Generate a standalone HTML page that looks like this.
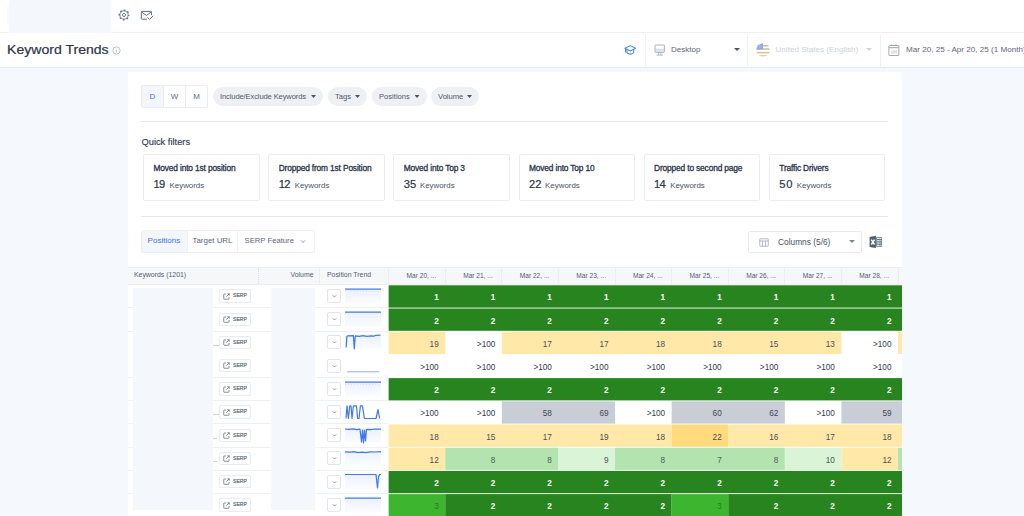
<!DOCTYPE html>
<html><head><meta charset="utf-8"><title>Keyword Trends</title>
<style>
*{box-sizing:border-box;margin:0;padding:0}
html,body{width:1024px;height:516px;overflow:hidden}
body{background:#f5f8fc;font-family:"Liberation Sans",sans-serif;color:#2f3a4f;position:relative;font-size:8px}
.abs{position:absolute}
.topbar{left:0;top:0;width:1024px;height:33px;background:#fff;border-bottom:1px solid #eceff4}
.ph{background:#f4f7fc}
.hdr{left:0;top:33px;width:1024px;height:35px;background:#fff;border-bottom:1px solid #e9edf3}
.title{left:7px;top:41px;font-size:13px;color:#2b3448;white-space:nowrap;line-height:18px;-webkit-text-stroke:.2px #2b3448;transform:scaleX(1.082);transform-origin:0 0}
.vsep{width:1px;top:34px;height:33px;background:#eef1f5}
.ht{top:44.200px;font-size:8px;line-height:12px;white-space:nowrap;color:#5d6678}
.card{left:128px;top:71.500px;width:773.500px;height:460px;background:#fff}
.seg{left:141px;top:85px;width:67px;height:23px;border:1px solid #e9edf3;border-radius:2px;background:#fff;display:flex}
.seg div{flex:1;text-align:center;font-size:8px;line-height:21px;color:#5b6b8c;border-left:1px solid #e6eaf1}
.seg div:first-child{border-left:0;background:#f3f6fb;color:#3b74e8}
.pill{top:87px;height:19px;border-radius:10px;background:#eef0f3;font-size:7.6px;line-height:19px;color:#505a6c;white-space:nowrap;padding-left:7px}
.pill i{position:absolute;right:7px;top:8px;width:5px;height:3px;background:#4a5366;clip-path:polygon(0 0,100% 0,50% 100%)}
.hr{left:141px;width:747px;height:1px;background:#e3e7ec}
.qf{left:141.500px;top:136.800px;font-size:9.300px;line-height:11px;color:#2f3a4f;-webkit-text-stroke:.150px #2f3a4f}
.qc{top:154px;width:116.600px;height:47px;border:1px solid #eaedf2;border-radius:2px;background:#fff}
.qc b{position:absolute;left:9.400px;top:7.600px;font-weight:normal;font-size:8.400px;letter-spacing:-.160px;line-height:10px;color:#2b3448;white-space:nowrap;-webkit-text-stroke:.300px #2b3448}
.qc span{position:absolute;left:9.400px;top:22px;font-size:11.200px;letter-spacing:-.700px;line-height:14px;-webkit-text-stroke:.200px #2b3448;color:#2b3448;white-space:nowrap}
.qc em{-webkit-text-stroke:0;font-style:normal;font-size:7.900px;color:#4a5366;margin-left:5px;letter-spacing:0}
.tabs{left:141px;top:230.300px;width:173.500px;height:22.500px;border:1px solid #edeff3;border-radius:2px;background:#fff}
.tabs div{position:absolute;top:0;height:20.500px;font-size:7.900px;line-height:20.500px;text-align:center;color:#5d6678;white-space:nowrap}
.colsel{left:748px;top:230.700px;width:114px;height:22.500px;border:1px solid #e6eaf0;border-radius:2px;background:#fff;font-size:8.350px;line-height:20px;color:#4a5366}
.th{top:267px;height:18px;background:#f6f7f9;border-top:1px solid #eceef2;border-bottom:1px solid #eceef2;font-size:6.9px;line-height:15px;color:#525c70;white-space:nowrap}
.c{position:absolute;text-align:right;padding-right:6.600px;font-size:8.200px;line-height:25.200px;white-space:nowrap}
.g1{color:#fff;font-weight:bold}
.g2{color:#2a7a22}
.g3{color:#4d6058}
.g4{color:#4a5a55}
.y1{color:#4a4f60}
.y2{color:#4a4f60}
.gr{color:#3f4759}
.w{color:#2f3a4f}
.serp{left:219.300px;width:31.500px;height:13.500px;border:1px solid #e8ebef;border-radius:2px;background:#fff;font-size:6.100px;line-height:10.400px;color:#5a6d7d;padding-left:12.500px}
.serp span{display:inline-block;transform:scaleX(.840);transform-origin:0 50%;-webkit-text-stroke:.200px #5a6d7d}
.dd{left:327.300px;width:13.500px;height:14px;border:1px solid #e1e5eb;border-radius:2px;background:#fff}
.sl{stroke:#3f78ea;stroke-width:1.2;fill:none;stroke-linejoin:round}
.rl{left:128px;width:260px;height:1px;background:#edf0f4}
</style></head><body>

<div class="abs topbar"></div>
<div class="abs" style="left:7px;top:6px;width:3px;height:19px;background:#f8fafd"></div>
<div class="abs ph" style="left:9px;top:0;width:102px;height:33.500px"></div>
<svg class="abs" style="left:118px;top:9.200px" width="12" height="12" viewBox="0 0 24 24" fill="none" stroke="#5d6c85" stroke-width="1.700"><circle cx="12" cy="12" r="3.100"/><circle cx="12" cy="12" r="8.300"/><circle cx="12" cy="12" r="9.700" stroke-width="2.600" stroke-dasharray="3.400 4.218" stroke-dashoffset="1.700"/></svg>
<svg class="abs" style="left:140px;top:10px" width="14" height="11" viewBox="0 0 28 22" fill="none" stroke="#5d6c85" stroke-width="2" stroke-linecap="round" stroke-linejoin="round"><path d="M13 18.400H4.400a1.800 1.800 0 0 1-1.800-1.800V4.600a1.800 1.800 0 0 1 1.800-1.800H21.200a1.800 1.800 0 0 1 1.800 1.800V9.600"/><path d="M3.200 4l9.600 6.800L22.400 4"/><path d="M15.600 15.400l3.400 3.600 7-7"/></svg>
<div class="abs hdr"></div>
<div class="abs title">Keyword Trends</div>
<svg class="abs" style="left:111.500px;top:45.500px" width="9" height="9" viewBox="0 0 18 18" fill="none" stroke="#a4abb8" stroke-width="1.400"><circle cx="9" cy="9" r="7.300"/><path d="M9 8v5M9 5v1.400"/></svg>
<svg class="abs" style="left:624.100px;top:44px" width="12.600" height="12" viewBox="0 0 26 24" fill="none" stroke="#4a88fb" stroke-width="2.200" stroke-linejoin="round" stroke-linecap="round"><path d="M13 3L2 8.500l11 5.500 11-5.500z"/><path d="M6 11v6.500c2 2 4.500 3 7 3s5-1 7-3V11"/><path d="M3 9v7"/></svg>
<div class="abs vsep" style="left:645px"></div>
<svg class="abs" style="left:653.500px;top:44.200px" width="12" height="12" viewBox="0 0 12 12" fill="none" stroke="#98a3b3"><rect x="1.500" y="5.300" width="8.400" height="2.600" fill="#e4e7eb" stroke="none"/><rect x="1" y="1" width="9.400" height="7.300" rx=".600" stroke-width=".850"/><path d="M1 5.200h9.400" stroke-width=".500" stroke="#b4bcc8"/><path d="M4.600 8.300v2.600M6.800 8.300v2.600" stroke-width=".800" stroke="#a6afbd"/><path d="M2.600 11.100h6.400" stroke-width=".900" stroke="#a6afbd"/></svg>
<div class="abs ht" style="left:671px">Desktop</div>
<i class="abs" style="left:734px;top:48.400px;border:3px solid transparent;border-top:3.500px solid #4a5366;border-bottom:0"></i>
<div class="abs vsep" style="left:747px"></div>
<svg class="abs" style="left:756px;top:43px" width="14" height="14" viewBox="0 0 28 28"><defs><clipPath id="fc"><circle cx="14" cy="14" r="13.500"/></clipPath></defs><g clip-path="url(#fc)"><rect width="28" height="28" fill="#fff"/><g fill="#d6b78c"><rect y="4" width="28" height="2.800"/><rect y="10.600" width="28" height="2.800"/><rect y="17.800" width="28" height="3"/><rect y="24.600" width="28" height="2.400"/></g><rect width="14" height="12.600" fill="#8aa8f3"/><path d="M3 4h9M3 8h9" stroke="#fff" stroke-width="1.200" stroke-dasharray="1.500 1.500" opacity=".800"/><path d="M3 19.300h22" stroke="#fff" stroke-width="1" stroke-dasharray="1.600 1.600" opacity=".700"/></g></svg>
<div class="abs ht" style="left:775.500px;color:#cdd1d8;font-size:8.100px">United States (English)</div>
<i class="abs" style="left:866px;top:48.400px;border:3px solid transparent;border-top:3.500px solid #d0d4db;border-bottom:0"></i>
<div class="abs vsep" style="left:880px"></div>
<svg class="abs" style="left:888.100px;top:44px" width="12" height="12" viewBox="0 0 12 12" fill="none" stroke="#98a3b3"><rect x=".900" y="1.500" width="10" height="10" rx=".400" stroke-width=".900"/><path d="M.900 3.700h10" stroke-width="1"/><path d="M3.500 .500v1.300M8 .500v1.300" stroke-width="1.300"/><path d="M4 5.800v4.200M6 5.800v4.200M8 5.800v4.200M3 7.900h6" stroke-width=".500" stroke="#b7bec9"/></svg>
<div class="abs ht" style="left:906px;font-size:8.100px">Mar 20, 25 - Apr 20, 25 (1 Month)</div>
<div class="abs card"></div>
<div class="abs seg"><div>D</div><div>W</div><div>M</div></div>
<div class="abs pill" style="left:213px;width:110px;letter-spacing:-.130px">Include/Exclude Keywords<i></i></div>
<div class="abs pill" style="left:328px;width:39px">Tags<i></i></div>
<div class="abs pill" style="left:372px;width:54.5px">Positions<i></i></div>
<div class="abs pill" style="left:431px;width:48px">Volume<i></i></div>
<div class="abs hr" style="top:121px"></div>
<div class="abs qf">Quick filters</div>
<div class="abs qc" style="left:143.10px"><b>Moved into 1st position</b><span>19<em>Keywords</em></span></div>
<div class="abs qc" style="left:268.25px"><b>Dropped from 1st Position</b><span>12<em>Keywords</em></span></div>
<div class="abs qc" style="left:393.40px"><b>Moved into Top 3</b><span style="letter-spacing:.100px">35<em style="margin-left:3.500px">Keywords</em></span></div>
<div class="abs qc" style="left:518.55px"><b>Moved into Top 10</b><span style="letter-spacing:.100px">22<em style="margin-left:3.500px">Keywords</em></span></div>
<div class="abs qc" style="left:643.70px"><b>Dropped to second page</b><span>14<em>Keywords</em></span></div>
<div class="abs qc" style="left:768.85px"><b>Traffic Drivers</b><span style="letter-spacing:.800px">50<em style="margin-left:3.500px">Keywords</em></span></div>
<div class="abs hr" style="top:216px"></div>
<div class="abs tabs"><div style="left:0;width:45px;background:#f3f6fb;color:#3b74e8;font-size:8.100px;text-indent:-1px">Positions</div><div style="left:45px;width:51px;border-left:1px solid #edeff3;border-right:1px solid #edeff3">Target URL</div><div style="left:96px;width:76px;text-align:left;padding-left:6.500px;font-size:7.700px">SERP Feature<svg style="position:absolute;left:61.500px;top:8px" width="6" height="5" viewBox="0 0 12 10" fill="none" stroke="#7b8496" stroke-width="1.800"><path d="M2 3l4 4 4-4"/></svg></div></div>
<div class="abs colsel"><svg style="position:absolute;left:10px;top:6px" width="10" height="9" viewBox="0 0 20 18" fill="none" stroke="#9aa2b1" stroke-width="1.500"><rect x="1.500" y="1.500" width="17" height="15" rx="1"/><path d="M1.500 6h17M7 6v10.500M13 6v10.500"/></svg><span style="position:absolute;left:29px;top:0">Columns (5/6)</span><i style="position:absolute;right:6.500px;top:8.500px;border:3px solid transparent;border-top:3.500px solid #7b8496;border-bottom:0"></i></div>
<svg class="abs" style="left:869px;top:235px" width="14" height="14" viewBox="0 0 14 14"><rect x="7.200" y="2" width="5.700" height="9.700" rx=".500" fill="#64778a"/><path d="M8 3.400h4.300M8 5.700h4.300M8 8h4.300M8 10.300h4.300" stroke="#fff" stroke-width="1.100"/><path d="M11 2.500v9" stroke="#64778a" stroke-width=".500"/><path d="M.600 2L6.900.800V12.900L.600 11.900z" fill="#4d6070"/><path d="M2.300 4.600L5.500 9.500M5.500 4.600L2.300 9.500" stroke="#fff" stroke-width="1.500"/></svg>
<div class="abs th" style="left:128px;width:774px"></div>
<div class="abs th" style="left:134px;background:none;border:0;top:267px;line-height:16px">Keywords (1201)</div>
<div class="abs" style="left:258px;top:268px;height:16px;border-left:1px dotted #d8dce3"></div>
<div class="abs th" style="left:260px;width:53.500px;text-align:right;background:none;border:0;line-height:16px">Volume</div>
<div class="abs" style="left:319px;top:268px;height:16px;border-left:1px solid #eaedf1"></div>
<div class="abs th" style="left:327px;background:none;border:0;line-height:16px">Position Trend</div>
<div class="abs" style="left:388.15px;top:268px;height:16px;border-left:1px solid #eaedf1"></div>
<div class="abs th" style="left:388.65px;width:56.60000000000002px;text-align:right;padding-right:9px;background:none;border:0;line-height:17.400px;font-size:6.600px">Mar 20, ...</div>
<div class="abs" style="left:444.75px;top:268px;height:16px;border-left:1px solid #eaedf1"></div>
<div class="abs th" style="left:445.25px;width:56.60000000000002px;text-align:right;padding-right:9px;background:none;border:0;line-height:17.400px;font-size:6.600px">Mar 21, ...</div>
<div class="abs" style="left:501.35px;top:268px;height:16px;border-left:1px solid #eaedf1"></div>
<div class="abs th" style="left:501.85px;width:56.60000000000002px;text-align:right;padding-right:9px;background:none;border:0;line-height:17.400px;font-size:6.600px">Mar 22, ...</div>
<div class="abs" style="left:557.95px;top:268px;height:16px;border-left:1px solid #eaedf1"></div>
<div class="abs th" style="left:558.45px;width:56.59999999999991px;text-align:right;padding-right:9px;background:none;border:0;line-height:17.400px;font-size:6.600px">Mar 23, ...</div>
<div class="abs" style="left:614.55px;top:268px;height:16px;border-left:1px solid #eaedf1"></div>
<div class="abs th" style="left:615.05px;width:56.60000000000002px;text-align:right;padding-right:9px;background:none;border:0;line-height:17.400px;font-size:6.600px">Mar 24, ...</div>
<div class="abs" style="left:671.15px;top:268px;height:16px;border-left:1px solid #eaedf1"></div>
<div class="abs th" style="left:671.65px;width:56.60000000000002px;text-align:right;padding-right:9px;background:none;border:0;line-height:17.400px;font-size:6.600px">Mar 25, ...</div>
<div class="abs" style="left:727.75px;top:268px;height:16px;border-left:1px solid #eaedf1"></div>
<div class="abs th" style="left:728.25px;width:56.60000000000002px;text-align:right;padding-right:9px;background:none;border:0;line-height:17.400px;font-size:6.600px">Mar 26, ...</div>
<div class="abs" style="left:784.35px;top:268px;height:16px;border-left:1px solid #eaedf1"></div>
<div class="abs th" style="left:784.85px;width:56.60000000000002px;text-align:right;padding-right:9px;background:none;border:0;line-height:17.400px;font-size:6.600px">Mar 27, ...</div>
<div class="abs" style="left:840.95px;top:268px;height:16px;border-left:1px solid #eaedf1"></div>
<div class="abs th" style="left:841.45px;width:56.59999999999991px;text-align:right;padding-right:9px;background:none;border:0;line-height:17.400px;font-size:6.600px">Mar 28, ...</div>
<div class="abs" style="left:897.55px;top:268px;height:16px;border-left:1px solid #eaedf1"></div>
<svg class="abs" style="left:388px;top:285px" width="514" height="231" viewBox="388 285 514 231"><rect x="388.65" y="285.30" width="513.35" height="22.300" fill="#27841e"/><rect x="388.65" y="308.50" width="513.35" height="22.300" fill="#27841e"/><rect x="388.65" y="331.70" width="56.60" height="22.300" fill="#ffe8a8"/><rect x="501.85" y="331.70" width="339.60" height="22.300" fill="#ffe8a8"/><rect x="898.05" y="331.70" width="3.95" height="22.300" fill="#ffe8a8"/><rect x="388.65" y="378.10" width="513.35" height="22.300" fill="#27841e"/><rect x="501.85" y="401.30" width="113.20" height="22.300" fill="#c9cdd6"/><rect x="671.65" y="401.30" width="113.20" height="22.300" fill="#c9cdd6"/><rect x="841.45" y="401.30" width="60.55" height="22.300" fill="#c9cdd6"/><rect x="388.65" y="424.50" width="283.00" height="22.300" fill="#ffe8a8"/><rect x="671.65" y="424.50" width="56.60" height="22.300" fill="#ffdb7d"/><rect x="728.25" y="424.50" width="173.75" height="22.300" fill="#ffe8a8"/><rect x="388.65" y="447.70" width="56.60" height="22.300" fill="#ffe8a8"/><rect x="445.25" y="447.70" width="113.20" height="22.300" fill="#b3e3ae"/><rect x="558.45" y="447.70" width="56.60" height="22.300" fill="#d9f4d6"/><rect x="615.05" y="447.70" width="169.80" height="22.300" fill="#b3e3ae"/><rect x="784.85" y="447.70" width="56.60" height="22.300" fill="#d9f4d6"/><rect x="841.45" y="447.70" width="56.60" height="22.300" fill="#ffe8a8"/><rect x="898.05" y="447.70" width="3.95" height="22.300" fill="#b3e3ae"/><rect x="388.65" y="470.90" width="513.35" height="22.300" fill="#27841e"/><rect x="388.65" y="494.10" width="56.60" height="22.300" fill="#3db52e"/><rect x="445.25" y="494.10" width="226.40" height="22.300" fill="#27841e"/><rect x="671.65" y="494.10" width="56.60" height="22.300" fill="#3db52e"/><rect x="728.25" y="494.10" width="173.75" height="22.300" fill="#27841e"/></svg>
<div class="abs rl" style="top:307.30px"></div>
<div class="abs serp" style="top:289.30px"><svg style="position:absolute;left:3px;top:2.500px" width="7" height="7" viewBox="0 0 14 14" fill="none" stroke="#5b6b7a" stroke-width="1.500"><path d="M6 2H2.500a1 1 0 0 0-1 1v8.500a1 1 0 0 0 1 1H11a1 1 0 0 0 1-1V8"/><path d="M8.500 1.500h4v4M12.500 1.500L6.500 7.500"/></svg><span>SERP</span></div>
<div class="abs dd" style="top:289.00px"><svg style="position:absolute;left:3.500px;top:4px" width="5" height="4" viewBox="0 0 10 8" fill="none" stroke="#6b7385" stroke-width="1.400"><path d="M1.500 2.500l3.500 3.500 3.500-3.500"/></svg></div>
<svg class="abs" style="left:345px;top:287.8px" width="36" height="17" viewBox="0 0 36 17"><rect x="0" y="1.500" width="36" height="14" fill="url(#sg)"/><path d="M0 1.2H36" class="sl"/><path d="M0 3.5H36" stroke="#c9d6ee" stroke-width=".6" stroke-dasharray="1 2" fill="none"/></svg>
<div class="c g1" style="left:388.65px;top:285.30px;width:56.65px;height:22.200px">1</div>
<div class="c g1" style="left:445.25px;top:285.30px;width:56.65px;height:22.200px">1</div>
<div class="c g1" style="left:501.85px;top:285.30px;width:56.65px;height:22.200px">1</div>
<div class="c g1" style="left:558.45px;top:285.30px;width:56.65px;height:22.200px">1</div>
<div class="c g1" style="left:615.05px;top:285.30px;width:56.65px;height:22.200px">1</div>
<div class="c g1" style="left:671.65px;top:285.30px;width:56.65px;height:22.200px">1</div>
<div class="c g1" style="left:728.25px;top:285.30px;width:56.65px;height:22.200px">1</div>
<div class="c g1" style="left:784.85px;top:285.30px;width:56.65px;height:22.200px">1</div>
<div class="c g1" style="left:841.45px;top:285.30px;width:56.65px;height:22.200px">1</div>
<div class="abs rl" style="top:330.50px"></div>
<div class="abs serp" style="top:312.50px"><svg style="position:absolute;left:3px;top:2.500px" width="7" height="7" viewBox="0 0 14 14" fill="none" stroke="#5b6b7a" stroke-width="1.500"><path d="M6 2H2.500a1 1 0 0 0-1 1v8.500a1 1 0 0 0 1 1H11a1 1 0 0 0 1-1V8"/><path d="M8.500 1.500h4v4M12.500 1.500L6.500 7.500"/></svg><span>SERP</span></div>
<div class="abs dd" style="top:312.20px"><svg style="position:absolute;left:3.500px;top:4px" width="5" height="4" viewBox="0 0 10 8" fill="none" stroke="#6b7385" stroke-width="1.400"><path d="M1.500 2.500l3.500 3.500 3.500-3.500"/></svg></div>
<svg class="abs" style="left:345px;top:311.0px" width="36" height="17" viewBox="0 0 36 17"><rect x="0" y="1.500" width="36" height="14" fill="url(#sg)"/><path d="M0 1.2H36" class="sl"/></svg>
<div class="c g1" style="left:388.65px;top:308.50px;width:56.65px;height:22.200px">2</div>
<div class="c g1" style="left:445.25px;top:308.50px;width:56.65px;height:22.200px">2</div>
<div class="c g1" style="left:501.85px;top:308.50px;width:56.65px;height:22.200px">2</div>
<div class="c g1" style="left:558.45px;top:308.50px;width:56.65px;height:22.200px">2</div>
<div class="c g1" style="left:615.05px;top:308.50px;width:56.65px;height:22.200px">2</div>
<div class="c g1" style="left:671.65px;top:308.50px;width:56.65px;height:22.200px">2</div>
<div class="c g1" style="left:728.25px;top:308.50px;width:56.65px;height:22.200px">2</div>
<div class="c g1" style="left:784.85px;top:308.50px;width:56.65px;height:22.200px">2</div>
<div class="c g1" style="left:841.45px;top:308.50px;width:56.65px;height:22.200px">2</div>
<div class="abs" style="left:213px;top:338.7px;font-size:7px;line-height:10px;color:#4a5366">...</div>
<div class="abs serp" style="top:335.70px"><svg style="position:absolute;left:3px;top:2.500px" width="7" height="7" viewBox="0 0 14 14" fill="none" stroke="#5b6b7a" stroke-width="1.500"><path d="M6 2H2.500a1 1 0 0 0-1 1v8.500a1 1 0 0 0 1 1H11a1 1 0 0 0 1-1V8"/><path d="M8.500 1.500h4v4M12.500 1.500L6.500 7.500"/></svg><span>SERP</span></div>
<div class="abs dd" style="top:335.40px"><svg style="position:absolute;left:3.500px;top:4px" width="5" height="4" viewBox="0 0 10 8" fill="none" stroke="#6b7385" stroke-width="1.400"><path d="M1.500 2.500l3.500 3.500 3.500-3.500"/></svg></div>
<svg class="abs" style="left:345px;top:334.2px" width="36" height="17" viewBox="0 0 36 17"><rect x="0" y="1.500" width="36" height="14" fill="url(#sg)"/><path d="M1.2 13.5L1.8 2.4L2.8 1.8L8.4 1.6L9.3 14.8L10.3 1.8L14 2.4L18 1.7L22 2.3L26 1.8L29 2.1L31 1.3L35.500 1.1" class="sl"/></svg>
<div class="c y1" style="left:388.65px;top:331.70px;width:56.65px;height:22.200px">19</div>
<div class="c w" style="left:445.25px;top:331.70px;width:56.65px;height:22.200px">>100</div>
<div class="c y1" style="left:501.85px;top:331.70px;width:56.65px;height:22.200px">17</div>
<div class="c y1" style="left:558.45px;top:331.70px;width:56.65px;height:22.200px">17</div>
<div class="c y1" style="left:615.05px;top:331.70px;width:56.65px;height:22.200px">18</div>
<div class="c y1" style="left:671.65px;top:331.70px;width:56.65px;height:22.200px">18</div>
<div class="c y1" style="left:728.25px;top:331.70px;width:56.65px;height:22.200px">15</div>
<div class="c y1" style="left:784.85px;top:331.70px;width:56.65px;height:22.200px">13</div>
<div class="c w" style="left:841.45px;top:331.70px;width:56.65px;height:22.200px">>100</div>
<div class="abs rl" style="top:376.90px"></div>
<div class="abs serp" style="top:358.90px"><svg style="position:absolute;left:3px;top:2.500px" width="7" height="7" viewBox="0 0 14 14" fill="none" stroke="#5b6b7a" stroke-width="1.500"><path d="M6 2H2.500a1 1 0 0 0-1 1v8.500a1 1 0 0 0 1 1H11a1 1 0 0 0 1-1V8"/><path d="M8.500 1.500h4v4M12.500 1.500L6.500 7.500"/></svg><span>SERP</span></div>
<div class="abs dd" style="top:358.60px"><svg style="position:absolute;left:3.500px;top:4px" width="5" height="4" viewBox="0 0 10 8" fill="none" stroke="#6b7385" stroke-width="1.400"><path d="M1.500 2.500l3.500 3.500 3.500-3.500"/></svg></div>
<svg class="abs" style="left:345px;top:357.4px" width="36" height="17" viewBox="0 0 36 17"><path d="M2 14.800H34" stroke="#8fb0f5" stroke-width="1" fill="none"/></svg>
<div class="c w" style="left:388.65px;top:354.90px;width:56.65px;height:22.200px">>100</div>
<div class="c w" style="left:445.25px;top:354.90px;width:56.65px;height:22.200px">>100</div>
<div class="c w" style="left:501.85px;top:354.90px;width:56.65px;height:22.200px">>100</div>
<div class="c w" style="left:558.45px;top:354.90px;width:56.65px;height:22.200px">>100</div>
<div class="c w" style="left:615.05px;top:354.90px;width:56.65px;height:22.200px">>100</div>
<div class="c w" style="left:671.65px;top:354.90px;width:56.65px;height:22.200px">>100</div>
<div class="c w" style="left:728.25px;top:354.90px;width:56.65px;height:22.200px">>100</div>
<div class="c w" style="left:784.85px;top:354.90px;width:56.65px;height:22.200px">>100</div>
<div class="c w" style="left:841.45px;top:354.90px;width:56.65px;height:22.200px">>100</div>
<div class="abs rl" style="top:400.10px"></div>
<div class="abs serp" style="top:382.10px"><svg style="position:absolute;left:3px;top:2.500px" width="7" height="7" viewBox="0 0 14 14" fill="none" stroke="#5b6b7a" stroke-width="1.500"><path d="M6 2H2.500a1 1 0 0 0-1 1v8.500a1 1 0 0 0 1 1H11a1 1 0 0 0 1-1V8"/><path d="M8.500 1.500h4v4M12.500 1.500L6.500 7.500"/></svg><span>SERP</span></div>
<div class="abs dd" style="top:381.80px"><svg style="position:absolute;left:3.500px;top:4px" width="5" height="4" viewBox="0 0 10 8" fill="none" stroke="#6b7385" stroke-width="1.400"><path d="M1.500 2.500l3.500 3.500 3.500-3.500"/></svg></div>
<svg class="abs" style="left:345px;top:380.6px" width="36" height="17" viewBox="0 0 36 17"><rect x="0" y="1.500" width="36" height="14" fill="url(#sg)"/><path d="M0 1.2H36" class="sl"/><path d="M0 3.5H36" stroke="#c9d6ee" stroke-width=".6" stroke-dasharray="1 2" fill="none"/></svg>
<div class="c g1" style="left:388.65px;top:378.10px;width:56.65px;height:22.200px">2</div>
<div class="c g1" style="left:445.25px;top:378.10px;width:56.65px;height:22.200px">2</div>
<div class="c g1" style="left:501.85px;top:378.10px;width:56.65px;height:22.200px">2</div>
<div class="c g1" style="left:558.45px;top:378.10px;width:56.65px;height:22.200px">2</div>
<div class="c g1" style="left:615.05px;top:378.10px;width:56.65px;height:22.200px">2</div>
<div class="c g1" style="left:671.65px;top:378.10px;width:56.65px;height:22.200px">2</div>
<div class="c g1" style="left:728.25px;top:378.10px;width:56.65px;height:22.200px">2</div>
<div class="c g1" style="left:784.85px;top:378.10px;width:56.65px;height:22.200px">2</div>
<div class="c g1" style="left:841.45px;top:378.10px;width:56.65px;height:22.200px">2</div>
<div class="abs rl" style="top:423.30px"></div>
<div class="abs" style="left:213px;top:408.3px;font-size:7px;line-height:10px;color:#4a5366">...</div>
<div class="abs serp" style="top:405.30px"><svg style="position:absolute;left:3px;top:2.500px" width="7" height="7" viewBox="0 0 14 14" fill="none" stroke="#5b6b7a" stroke-width="1.500"><path d="M6 2H2.500a1 1 0 0 0-1 1v8.500a1 1 0 0 0 1 1H11a1 1 0 0 0 1-1V8"/><path d="M8.500 1.500h4v4M12.500 1.500L6.500 7.500"/></svg><span>SERP</span></div>
<div class="abs dd" style="top:405.00px"><svg style="position:absolute;left:3.500px;top:4px" width="5" height="4" viewBox="0 0 10 8" fill="none" stroke="#6b7385" stroke-width="1.400"><path d="M1.500 2.500l3.500 3.500 3.500-3.500"/></svg></div>
<svg class="abs" style="left:345px;top:403.8px" width="36" height="17" viewBox="0 0 36 17"><path d="M1 14.500L2 1.800L3.400 14.500L4.800 1.800L6 1.800L7 14.500L8.400 1.800L11.500 1.800L12.600 14.500L14 14.500L15.400 1.800L17.400 1.800L19.400 14.500H31L33 5.500L34.600 14.500" class="sl" stroke-width="1"/></svg>
<div class="c w" style="left:388.65px;top:401.30px;width:56.65px;height:22.200px">>100</div>
<div class="c w" style="left:445.25px;top:401.30px;width:56.65px;height:22.200px">>100</div>
<div class="c gr" style="left:501.85px;top:401.30px;width:56.65px;height:22.200px">58</div>
<div class="c gr" style="left:558.45px;top:401.30px;width:56.65px;height:22.200px">69</div>
<div class="c w" style="left:615.05px;top:401.30px;width:56.65px;height:22.200px">>100</div>
<div class="c gr" style="left:671.65px;top:401.30px;width:56.65px;height:22.200px">60</div>
<div class="c gr" style="left:728.25px;top:401.30px;width:56.65px;height:22.200px">62</div>
<div class="c w" style="left:784.85px;top:401.30px;width:56.65px;height:22.200px">>100</div>
<div class="c gr" style="left:841.45px;top:401.30px;width:56.65px;height:22.200px">59</div>
<div class="abs rl" style="top:446.50px"></div>
<div class="abs" style="left:213px;top:431.5px;font-size:7px;line-height:10px;color:#4a5366">..</div>
<div class="abs serp" style="top:428.50px"><svg style="position:absolute;left:3px;top:2.500px" width="7" height="7" viewBox="0 0 14 14" fill="none" stroke="#5b6b7a" stroke-width="1.500"><path d="M6 2H2.500a1 1 0 0 0-1 1v8.500a1 1 0 0 0 1 1H11a1 1 0 0 0 1-1V8"/><path d="M8.500 1.500h4v4M12.500 1.500L6.500 7.500"/></svg><span>SERP</span></div>
<div class="abs dd" style="top:428.20px"><svg style="position:absolute;left:3.500px;top:4px" width="5" height="4" viewBox="0 0 10 8" fill="none" stroke="#6b7385" stroke-width="1.400"><path d="M1.500 2.500l3.500 3.500 3.500-3.500"/></svg></div>
<svg class="abs" style="left:345px;top:427.0px" width="36" height="17" viewBox="0 0 36 17"><rect x="0" y="1.500" width="36" height="14" fill="url(#sg)"/><path d="M0 2L4 2.4L8 1.8L12 2.6L15 2.2L16.5 15L17.5 3L18.5 16L19.5 3L20.5 14L21.5 2.4L26 2.6L30 2L36 2.2" class="sl"/></svg>
<div class="c y1" style="left:388.65px;top:424.50px;width:56.65px;height:22.200px">18</div>
<div class="c y1" style="left:445.25px;top:424.50px;width:56.65px;height:22.200px">15</div>
<div class="c y1" style="left:501.85px;top:424.50px;width:56.65px;height:22.200px">17</div>
<div class="c y1" style="left:558.45px;top:424.50px;width:56.65px;height:22.200px">19</div>
<div class="c y1" style="left:615.05px;top:424.50px;width:56.65px;height:22.200px">18</div>
<div class="c y2" style="left:671.65px;top:424.50px;width:56.65px;height:22.200px">22</div>
<div class="c y1" style="left:728.25px;top:424.50px;width:56.65px;height:22.200px">16</div>
<div class="c y1" style="left:784.85px;top:424.50px;width:56.65px;height:22.200px">17</div>
<div class="c y1" style="left:841.45px;top:424.50px;width:56.65px;height:22.200px">18</div>
<div class="abs rl" style="top:469.70px"></div>
<div class="abs" style="left:213px;top:454.70000000000005px;font-size:7px;line-height:10px;color:#4a5366">..</div>
<div class="abs serp" style="top:451.70px"><svg style="position:absolute;left:3px;top:2.500px" width="7" height="7" viewBox="0 0 14 14" fill="none" stroke="#5b6b7a" stroke-width="1.500"><path d="M6 2H2.500a1 1 0 0 0-1 1v8.500a1 1 0 0 0 1 1H11a1 1 0 0 0 1-1V8"/><path d="M8.500 1.500h4v4M12.500 1.500L6.500 7.500"/></svg><span>SERP</span></div>
<div class="abs dd" style="top:451.40px"><svg style="position:absolute;left:3.500px;top:4px" width="5" height="4" viewBox="0 0 10 8" fill="none" stroke="#6b7385" stroke-width="1.400"><path d="M1.500 2.500l3.500 3.500 3.500-3.500"/></svg></div>
<svg class="abs" style="left:345px;top:450.20000000000005px" width="36" height="17" viewBox="0 0 36 17"><rect x="0" y="1.500" width="36" height="14" fill="url(#sg)"/><path d="M0 1.8L5 2.2L9 1.6L13 2.6L17 2.2L21 2.6L25 1.8L30 2L36 1.6" class="sl"/></svg>
<div class="c y1" style="left:388.65px;top:447.70px;width:56.65px;height:22.200px">12</div>
<div class="c g3" style="left:445.25px;top:447.70px;width:56.65px;height:22.200px">8</div>
<div class="c g3" style="left:501.85px;top:447.70px;width:56.65px;height:22.200px">8</div>
<div class="c g4" style="left:558.45px;top:447.70px;width:56.65px;height:22.200px">9</div>
<div class="c g3" style="left:615.05px;top:447.70px;width:56.65px;height:22.200px">8</div>
<div class="c g3" style="left:671.65px;top:447.70px;width:56.65px;height:22.200px">7</div>
<div class="c g3" style="left:728.25px;top:447.70px;width:56.65px;height:22.200px">8</div>
<div class="c g4" style="left:784.85px;top:447.70px;width:56.65px;height:22.200px">10</div>
<div class="c y1" style="left:841.45px;top:447.70px;width:56.65px;height:22.200px">12</div>
<div class="abs rl" style="top:492.90px"></div>
<div class="abs serp" style="top:474.90px"><svg style="position:absolute;left:3px;top:2.500px" width="7" height="7" viewBox="0 0 14 14" fill="none" stroke="#5b6b7a" stroke-width="1.500"><path d="M6 2H2.500a1 1 0 0 0-1 1v8.500a1 1 0 0 0 1 1H11a1 1 0 0 0 1-1V8"/><path d="M8.500 1.500h4v4M12.500 1.500L6.500 7.500"/></svg><span>SERP</span></div>
<div class="abs dd" style="top:474.60px"><svg style="position:absolute;left:3.500px;top:4px" width="5" height="4" viewBox="0 0 10 8" fill="none" stroke="#6b7385" stroke-width="1.400"><path d="M1.500 2.500l3.500 3.500 3.500-3.500"/></svg></div>
<svg class="abs" style="left:345px;top:473.4px" width="36" height="17" viewBox="0 0 36 17"><rect x="0" y="1.500" width="36" height="14" fill="url(#sg)"/><path d="M0 1.5H31L32.5 15L33.5 4L34.5 1.5H36" class="sl"/></svg>
<div class="c g1" style="left:388.65px;top:470.90px;width:56.65px;height:22.200px">2</div>
<div class="c g1" style="left:445.25px;top:470.90px;width:56.65px;height:22.200px">2</div>
<div class="c g1" style="left:501.85px;top:470.90px;width:56.65px;height:22.200px">2</div>
<div class="c g1" style="left:558.45px;top:470.90px;width:56.65px;height:22.200px">2</div>
<div class="c g1" style="left:615.05px;top:470.90px;width:56.65px;height:22.200px">2</div>
<div class="c g1" style="left:671.65px;top:470.90px;width:56.65px;height:22.200px">2</div>
<div class="c g1" style="left:728.25px;top:470.90px;width:56.65px;height:22.200px">2</div>
<div class="c g1" style="left:784.85px;top:470.90px;width:56.65px;height:22.200px">2</div>
<div class="c g1" style="left:841.45px;top:470.90px;width:56.65px;height:22.200px">2</div>
<div class="abs rl" style="top:516.10px"></div>
<div class="abs serp" style="top:498.10px"><svg style="position:absolute;left:3px;top:2.500px" width="7" height="7" viewBox="0 0 14 14" fill="none" stroke="#5b6b7a" stroke-width="1.500"><path d="M6 2H2.500a1 1 0 0 0-1 1v8.500a1 1 0 0 0 1 1H11a1 1 0 0 0 1-1V8"/><path d="M8.500 1.500h4v4M12.500 1.500L6.500 7.500"/></svg><span>SERP</span></div>
<div class="abs dd" style="top:497.80px"><svg style="position:absolute;left:3.500px;top:4px" width="5" height="4" viewBox="0 0 10 8" fill="none" stroke="#6b7385" stroke-width="1.400"><path d="M1.500 2.500l3.500 3.500 3.500-3.500"/></svg></div>
<svg class="abs" style="left:345px;top:496.6px" width="36" height="17" viewBox="0 0 36 17"><rect x="0" y="1.500" width="36" height="14" fill="url(#sg)"/><path d="M0 1.2H36" class="sl"/></svg>
<div class="c g2" style="left:388.65px;top:494.10px;width:56.65px;height:22.200px">3</div>
<div class="c g1" style="left:445.25px;top:494.10px;width:56.65px;height:22.200px">2</div>
<div class="c g1" style="left:501.85px;top:494.10px;width:56.65px;height:22.200px">2</div>
<div class="c g1" style="left:558.45px;top:494.10px;width:56.65px;height:22.200px">2</div>
<div class="c g1" style="left:615.05px;top:494.10px;width:56.65px;height:22.200px">2</div>
<div class="c g2" style="left:671.65px;top:494.10px;width:56.65px;height:22.200px">3</div>
<div class="c g1" style="left:728.25px;top:494.10px;width:56.65px;height:22.200px">2</div>
<div class="c g1" style="left:784.85px;top:494.10px;width:56.65px;height:22.200px">2</div>
<div class="c g1" style="left:841.45px;top:494.10px;width:56.65px;height:22.200px">2</div>
<div class="abs ph" style="left:133.300px;top:288px;width:79.700px;height:222px"></div>
<div class="abs ph" style="left:270.500px;top:288px;width:44.500px;height:222px"></div>
<svg width="0" height="0" style="position:absolute"><defs><linearGradient id="sg" x1="0" y1="0" x2="0" y2="1"><stop offset="0" stop-color="#ebf1fc"/><stop offset="1" stop-color="#fbfcff"/></linearGradient></defs></svg>
</body></html>
